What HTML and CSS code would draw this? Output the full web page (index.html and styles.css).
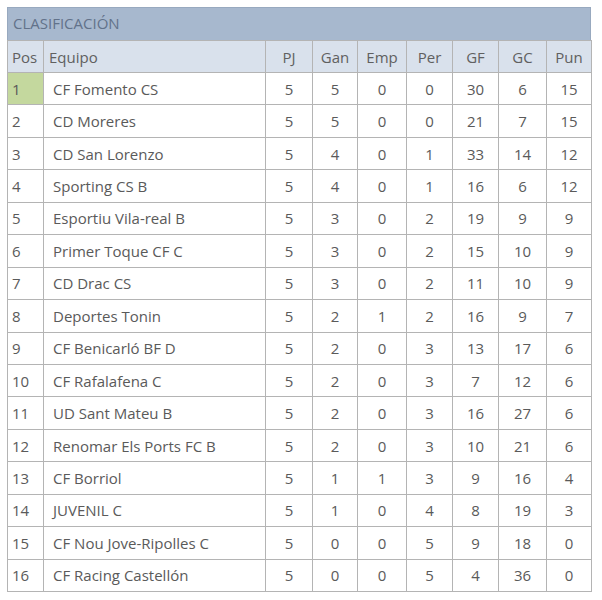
FILE: index.html
```html
<!DOCTYPE html>
<html lang="es">
<head>
<meta charset="utf-8">
<title>Clasificación</title>
<link rel="stylesheet" href="styles.css">
</head>
<body>
<div class="wrap">
  <div class="title">CLASIFICACIÓN</div>
  <table class="standings">
    <colgroup>
      <col class="c-pos"><col class="c-team"><col class="c-pj"><col class="c-gan"><col class="c-emp"><col class="c-per"><col class="c-gf"><col class="c-gc"><col class="c-pun">
    </colgroup>
    <thead>
      <tr><th class="pos">Pos</th><th class="team">Equipo</th><th>PJ</th><th>Gan</th><th>Emp</th><th>Per</th><th>GF</th><th>GC</th><th>Pun</th></tr>
    </thead>
    <tbody>
      <tr><td class="pos first">1</td><td class="team">CF Fomento CS</td><td>5</td><td>5</td><td>0</td><td>0</td><td>30</td><td>6</td><td>15</td></tr>
      <tr><td class="pos">2</td><td class="team">CD Moreres</td><td>5</td><td>5</td><td>0</td><td>0</td><td>21</td><td>7</td><td>15</td></tr>
      <tr><td class="pos">3</td><td class="team">CD San Lorenzo</td><td>5</td><td>4</td><td>0</td><td>1</td><td>33</td><td>14</td><td>12</td></tr>
      <tr><td class="pos">4</td><td class="team">Sporting CS B</td><td>5</td><td>4</td><td>0</td><td>1</td><td>16</td><td>6</td><td>12</td></tr>
      <tr><td class="pos">5</td><td class="team">Esportiu Vila-real B</td><td>5</td><td>3</td><td>0</td><td>2</td><td>19</td><td>9</td><td>9</td></tr>
      <tr><td class="pos">6</td><td class="team">Primer Toque CF C</td><td>5</td><td>3</td><td>0</td><td>2</td><td>15</td><td>10</td><td>9</td></tr>
      <tr><td class="pos">7</td><td class="team">CD Drac CS</td><td>5</td><td>3</td><td>0</td><td>2</td><td>11</td><td>10</td><td>9</td></tr>
      <tr><td class="pos">8</td><td class="team">Deportes Tonin</td><td>5</td><td>2</td><td>1</td><td>2</td><td>16</td><td>9</td><td>7</td></tr>
      <tr><td class="pos">9</td><td class="team">CF Benicarló BF D</td><td>5</td><td>2</td><td>0</td><td>3</td><td>13</td><td>17</td><td>6</td></tr>
      <tr><td class="pos">10</td><td class="team">CF Rafalafena C</td><td>5</td><td>2</td><td>0</td><td>3</td><td>7</td><td>12</td><td>6</td></tr>
      <tr><td class="pos">11</td><td class="team">UD Sant Mateu B</td><td>5</td><td>2</td><td>0</td><td>3</td><td>16</td><td>27</td><td>6</td></tr>
      <tr><td class="pos">12</td><td class="team">Renomar Els Ports FC B</td><td>5</td><td>2</td><td>0</td><td>3</td><td>10</td><td>21</td><td>6</td></tr>
      <tr><td class="pos">13</td><td class="team">CF Borriol</td><td>5</td><td>1</td><td>1</td><td>3</td><td>9</td><td>16</td><td>4</td></tr>
      <tr><td class="pos">14</td><td class="team">JUVENIL C</td><td>5</td><td>1</td><td>0</td><td>4</td><td>8</td><td>19</td><td>3</td></tr>
      <tr><td class="pos">15</td><td class="team">CF Nou Jove-Ripolles C</td><td>5</td><td>0</td><td>0</td><td>5</td><td>9</td><td>18</td><td>0</td></tr>
      <tr><td class="pos">16</td><td class="team">CF Racing Castellón</td><td>5</td><td>0</td><td>0</td><td>5</td><td>4</td><td>36</td><td>0</td></tr>
    </tbody>
  </table>
</div>
</body>
</html>
```

FILE: styles.css
```css
html, body {
  margin: 0;
  padding: 0;
  background: #ffffff;
}

.wrap {
  margin: 7px 0 0 7px;
  width: 584px;
  font-family: "Open Sans", "Liberation Sans", sans-serif;
  font-size: 15px;
  color: #5a5a5a;
}

.title {
  box-sizing: border-box;
  height: 33px;
  line-height: 31px;
  padding-left: 5px;
  background: #a7b8ce;
  border: 1px solid #98a9bf;
  border-bottom: none;
  color: #62728a;
  font-size: 15px;
}

.standings {
  width: 584px;
  border-collapse: collapse;
  table-layout: fixed;
}

.c-pos { width: 36px; }
.c-team { width: 222px; }
.c-pj { width: 47px; }
.c-gan { width: 45px; }
.c-emp { width: 49px; }
.c-per { width: 46px; }
.c-gf { width: 46px; }
.c-gc { width: 48px; }
.c-pun { width: 45px; }

.standings th,
.standings td {
  border: 1px solid #b4b4b4;
  padding: 0;
  text-align: center;
  font-weight: normal;
  white-space: nowrap;
}

.standings thead tr {
  height: 32px;
}

.standings th {
  background: #d9e1ec;
  color: #606060;
}

.standings tbody tr {
  height: 32.44px;
}

.standings .pos {
  text-align: left;
  padding-left: 4px;
}

.standings .team {
  text-align: left;
  padding-left: 5px;
}

.standings td.team {
  padding-left: 9px;
}

.standings td.first {
  background: #c4d89e;
}
```
